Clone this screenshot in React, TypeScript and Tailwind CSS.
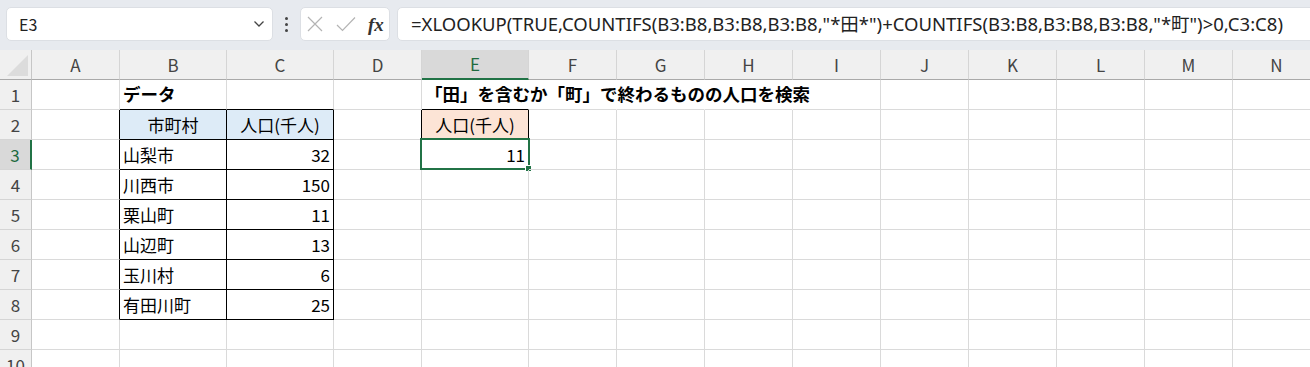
import React from 'react';

const FONT = '[font-family:"Noto_Sans_CJK_JP",sans-serif]';

type Col = { id: string; w: string };

const cols: Col[] = [
  { id: 'A', w: 'w-[88px]' },
  { id: 'B', w: 'w-[107px]' },
  { id: 'C', w: 'w-[107px]' },
  { id: 'D', w: 'w-[88px]' },
  { id: 'E', w: 'w-[107px]' },
  { id: 'F', w: 'w-[88px]' },
  { id: 'G', w: 'w-[88px]' },
  { id: 'H', w: 'w-[88px]' },
  { id: 'I', w: 'w-[88px]' },
  { id: 'J', w: 'w-[88px]' },
  { id: 'K', w: 'w-[88px]' },
  { id: 'L', w: 'w-[88px]' },
  { id: 'M', w: 'w-[88px]' },
  { id: 'N', w: 'w-[88px]' },
];

type Cell = { text: string; align?: 'left' | 'center' | 'right'; bold?: boolean; fill?: string };

const cells: Record<string, Cell> = {
  B1: { text: 'データ', bold: true },
  E1: { text: '「田」を含むか「町」で終わるものの人口を検索', bold: true },
  B2: { text: '市町村', align: 'center', fill: 'bg-[#ddebf7]' },
  C2: { text: '人口(千人)', align: 'center', fill: 'bg-[#ddebf7]' },
  E2: { text: '人口(千人)', align: 'center', fill: 'bg-[#fce4d6]' },
  B3: { text: '山梨市' },
  C3: { text: '32', align: 'right' },
  B4: { text: '川西市' },
  C4: { text: '150', align: 'right' },
  B5: { text: '栗山町' },
  C5: { text: '11', align: 'right' },
  B6: { text: '山辺町' },
  C6: { text: '13', align: 'right' },
  B7: { text: '玉川村' },
  C7: { text: '6', align: 'right' },
  B8: { text: '有田川町' },
  C8: { text: '25', align: 'right' },
  E3: { text: '11', align: 'right' },
};

const rows = [1, 2, 3, 4, 5, 6, 7, 8, 9, 10];

// cells that carry a black outline
const inTable = (r: number, c: string) =>
  ((c === 'B' || c === 'C') && r >= 2 && r <= 8) || (c === 'E' && r === 2);

// E1 text runs over these cells, so their right gridline is hidden
const overflowed = ['E1', 'F1', 'G1', 'H1'];

const nextCol = (c: string) => {
  const i = cols.findIndex((x) => x.id === c);
  return cols[i + 1]?.id ?? '';
};

const FormulaBar: React.FC = () => (
  <div className="h-[50px] bg-[#e7eaef] flex items-start pt-[7px] pl-[6px]">
    <div className="w-[267px] h-[34px] shrink-0 bg-white rounded-[5px] border border-[#dcdfe4] flex items-center justify-between pl-[12px] pr-[7px]">
      <span className={`text-[16px] text-[#222] ${FONT}`}>E3</span>
      <svg width="12" height="8" viewBox="0 0 12 8" fill="none" stroke="#444" strokeWidth="1.3">
        <path d="M1.5 1.5 L6 6 L10.5 1.5" />
      </svg>
    </div>
    <div className="w-[27px] h-[34px] shrink-0 flex flex-col items-center justify-center gap-[3px]">
      <span className="w-[3px] h-[3px] bg-[#444] rounded-full" />
      <span className="w-[3px] h-[3px] bg-[#444] rounded-full" />
      <span className="w-[3px] h-[3px] bg-[#444] rounded-full" />
    </div>
    <div className="w-[90px] h-[34px] shrink-0 bg-white rounded-[5px] border border-[#dcdfe4] flex items-center pl-[6px] gap-[13px]">
      <svg width="16" height="16" viewBox="0 0 16 16" fill="none" stroke="#b4b4b4" strokeWidth="1.2">
        <path d="M1 1 L15 15 M15 1 L1 15" />
      </svg>
      <svg width="20" height="16" viewBox="0 0 20 16" fill="none" stroke="#b4b4b4" strokeWidth="1.2">
        <path d="M1 9 L6.5 14.5 L19 1.5" />
      </svg>
      <span className="text-[19px] italic font-bold text-[#333] [font-family:'Liberation_Serif',serif] leading-none -ml-[1px]">
        fx
      </span>
    </div>
    <div className="flex-1 h-[34px] ml-[7px] -mr-[8px] bg-white rounded-[5px] border border-[#dcdfe4] flex items-center pl-[13px]">
      <span className={`text-[18.5px] text-[#222] whitespace-nowrap [font-family:"Noto_Sans","Noto_Sans_CJK_JP",sans-serif]`}>
        =XLOOKUP(TRUE,COUNTIFS(B3:B8,B3:B8,B3:B8,"*田*")+COUNTIFS(B3:B8,B3:B8,B3:B8,"*町")&gt;0,C3:C8)
      </span>
    </div>
  </div>
);

const HeaderRow: React.FC = () => (
  <div className="flex h-[30px]">
    <div className="w-[32px] shrink-0 bg-[#f0f0f0] border-r border-r-[#c6c6c6] border-b border-b-[#a9a9a9] flex items-end justify-end pr-[3px] pb-[3px]">
      <div className="w-0 h-0 border-l-[21px] border-l-transparent border-b-[21px] border-b-[#dcdcdc]" />
    </div>
    {cols.map((c) =>
      c.id === 'E' ? (
        <div
          key={c.id}
          className={`${c.w} shrink-0 bg-[#d9d9d9] border-r border-r-[#d5d5d5] border-b-2 border-b-[#217346] flex items-center justify-center text-[17px] text-[#1e6b3f] ${FONT}`}
        >
          {c.id}
        </div>
      ) : (
        <div
          key={c.id}
          className={`${c.w} shrink-0 bg-[#f0f0f0] border-r border-r-[#d5d5d5] border-b border-b-[#a9a9a9] flex items-center justify-center text-[17px] text-[#444] ${FONT}`}
        >
          {c.id}
        </div>
      )
    )}
  </div>
);

const SheetCell: React.FC<{ r: number; c: Col }> = ({ r, c }) => {
  const key = `${c.id}${r}`;
  const cell = cells[key];
  const rightBlack = inTable(r, c.id) || inTable(r, nextCol(c.id));
  const bottomBlack = inTable(r, c.id) || inTable(r + 1, c.id);
  const rightCls = overflowed.includes(key)
    ? 'border-r-transparent'
    : rightBlack
    ? 'border-r-black'
    : 'border-r-[#dadada]';
  const bottomCls = bottomBlack ? 'border-b-black' : 'border-b-[#dadada]';
  const align =
    cell?.align === 'center' ? 'justify-center' : cell?.align === 'right' ? 'justify-end' : 'justify-start';

  return (
    <div
      className={`${c.w} h-[30px] shrink-0 relative flex items-center px-[3px] border-r border-b ${rightCls} ${bottomCls} ${
        cell?.fill ?? ''
      } ${align}`}
    >
      {cell && (
        <span
          className={`whitespace-nowrap text-black ${FONT} ${cell.bold ? 'font-bold text-[17.5px]' : 'text-[17px]'}`}
        >
          {cell.text}
        </span>
      )}
      {key === 'E3' && (
        <>
          <div className="absolute left-[-2px] top-[-2px] w-[110px] h-[32px] border-2 border-[#217346] pointer-events-none" />
          <div className="absolute left-[103px] top-[25px] w-[7px] h-[7px] bg-[#217346] border border-white" />
        </>
      )}
    </div>
  );
};

const App: React.FC = () => {
  return (
    <div className="w-[1310px] h-[367px] overflow-hidden bg-white">
      <FormulaBar />
      <HeaderRow />
      {rows.map((r) => (
        <div key={r} className="flex h-[30px]">
          {r === 3 ? (
            <div
              className={`w-[32px] shrink-0 bg-[#d9d9d9] border-r-2 border-r-[#217346] border-b border-b-[#d5d5d5] flex items-center justify-center text-[17px] text-[#1e6b3f] ${FONT}`}
            >
              {r}
            </div>
          ) : (
            <div
              className={`w-[32px] shrink-0 bg-[#f0f0f0] border-r border-r-[#c6c6c6] border-b border-b-[#d5d5d5] flex items-center justify-center text-[17px] text-[#444] ${FONT}`}
            >
              {r}
            </div>
          )}
          {cols.map((c) => (
            <SheetCell key={c.id} r={r} c={c} />
          ))}
        </div>
      ))}
    </div>
  );
};

export default App;
